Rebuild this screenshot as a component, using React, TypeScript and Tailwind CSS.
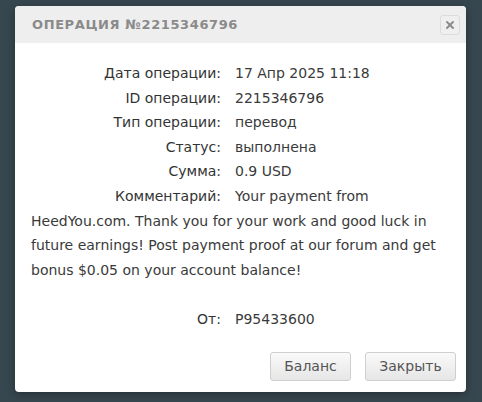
import { X } from 'lucide-react';

const rows: [string, string][] = [
    ['Дата операции:', '17 Апр 2025 11:18'],
    ['ID операции:', '2215346796'],
    ['Тип операции:', 'перевод'],
    ['Статус:', 'выполнена'],
    ['Сумма:', '0.9 USD'],
];

function Row({ label, value }: { label: string; value: string }) {
    return (
        <div className="flex">
            <div className="w-[190px] shrink-0 text-right text-[#333]">{label}</div>
            <div className="pl-[14px] text-[#3a3a3a]">{value}</div>
        </div>
    );
}

export default function App() {
    return (
        <div className="w-[482px] h-[402px] bg-[#37474f] pt-[6px] pl-[15px] overflow-hidden">
            <div className="w-[451px] bg-white rounded-[4px] overflow-hidden shadow-[0_2px_8px_rgba(0,0,0,0.35)]">
                {/* header */}
                <div className="h-[37px] bg-[#eeeeee] flex items-center justify-between pl-[17px] pr-[6px]">
                    <h2
                        className="text-[13px] font-semibold tracking-[0.6px] text-[#8a8a8a] uppercase"
                        style={{ fontFamily: '"DejaVu Sans", sans-serif' }}
                    >
                        Операция №2215346796
                    </h2>
                    <button className="w-[20px] h-[20px] rounded-[3px] border border-[#dcdcdc] bg-[#efefef] flex items-center justify-center">
                        <X className="w-[12px] h-[12px] text-[#8d8d8d]" strokeWidth={4} />
                    </button>
                </div>

                {/* body */}
                <div
                    className="pt-[18px] pl-[16px] pr-[14px] text-[14px] leading-[24.6px]"
                    style={{ fontFamily: '"DejaVu Sans", sans-serif' }}
                >
                    {rows.map(([l, v]) => (
                        <Row key={l} label={l} value={v} />
                    ))}
                    <div className="text-[#3a3a3a] whitespace-nowrap">
                        <span className="inline-block w-[190px] text-right text-[#333]">Комментарий:</span>
                        <span className="pl-[14px]">Your payment from</span>
                        <br />
                        HeedYou.com. Thank you for your work and good luck in
                        <br />
                        future earnings! Post payment proof at our forum and get
                        <br />
                        bonus $0.05 on your account balance!
                    </div>
                    <div className="h-[24.6px]" />
                    <Row label="От:" value="P95433600" />
                </div>

                {/* footer */}
                <div
                    className="flex justify-end gap-[14px] pt-[20px] pr-[10px] pb-[11px]"
                    style={{ fontFamily: '"DejaVu Sans", sans-serif' }}
                >
                    <button className="w-[81px] h-[29px] rounded-[3px] border border-[#cfcfcf] bg-gradient-to-b from-[#fafafa] to-[#e6e6e6] text-[14px] text-[#555]">
                        Баланс
                    </button>
                    <button className="w-[91px] h-[29px] rounded-[3px] border border-[#cfcfcf] bg-gradient-to-b from-[#fafafa] to-[#e6e6e6] text-[14px] text-[#555]">
                        Закрыть
                    </button>
                </div>
            </div>
        </div>
    );
}
